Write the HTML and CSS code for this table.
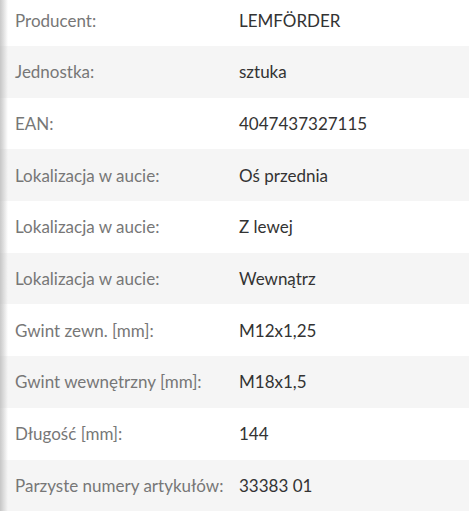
FILE: index.html
```html
<!DOCTYPE html>
<html lang="pl">
<head>
<meta charset="utf-8">
<link rel="stylesheet" href="styles.css">
</head>
<body>
<div class="specs">
  <div class="row"><div class="label">Producent:</div><div class="value">LEMFÖRDER</div></div>
  <div class="row"><div class="label">Jednostka:</div><div class="value">sztuka</div></div>
  <div class="row"><div class="label">EAN:</div><div class="value">4047437327115</div></div>
  <div class="row"><div class="label">Lokalizacja w aucie:</div><div class="value">Oś przednia</div></div>
  <div class="row"><div class="label">Lokalizacja w aucie:</div><div class="value">Z lewej</div></div>
  <div class="row"><div class="label">Lokalizacja w aucie:</div><div class="value">Wewnątrz</div></div>
  <div class="row"><div class="label">Gwint zewn. [mm]:</div><div class="value">M12x1,25</div></div>
  <div class="row"><div class="label">Gwint wewnętrzny [mm]:</div><div class="value">M18x1,5</div></div>
  <div class="row"><div class="label">Długość [mm]:</div><div class="value">144</div></div>
  <div class="row"><div class="label">Parzyste numery artykułów:</div><div class="value">33383 01</div></div>
</div>
</body>
</html>
```

FILE: styles.css
```css
html, body {
  margin: 0;
  padding: 0;
  background: #fff;
  overflow: hidden;
}
body {
  font-family: Lato, "Open Sans", sans-serif;
  font-size: 17px;
}
.specs {
  margin-top: -5.7px;
  display: flex;
  flex-direction: column;
}
.row {
  height: 51.7px;
  display: flex;
  align-items: center;
  padding-left: 15px;
  background: linear-gradient(to right, #c9c9c9 0, #dcdcdc 3px, rgba(255,255,255,0) 8px), #ffffff;
}
.row:nth-child(even) {
  background: linear-gradient(to right, #c6c6c6 0, #d8d8d8 3px, rgba(245,245,245,0) 8px), #f5f5f5;
}
.label {
  width: 224px;
  flex: none;
  color: #777777;
}
.value {
  color: #333333;
}
```
